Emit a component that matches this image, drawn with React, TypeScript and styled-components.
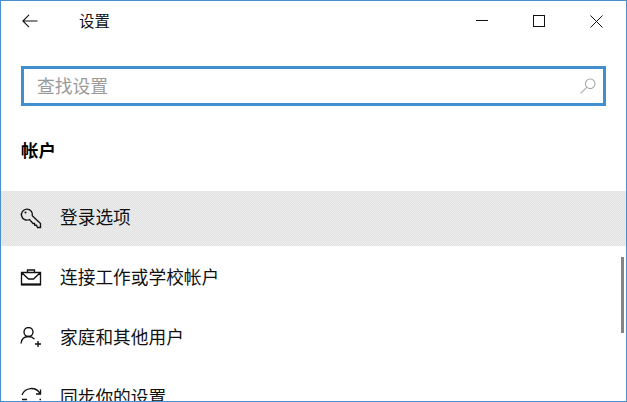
import React from 'react';
import styled, { createGlobalStyle } from 'styled-components';

const GlobalStyle = createGlobalStyle`
  html, body {
    margin: 0;
    padding: 0;
    background: #ffffff;
  }
  body {
    font-family: "Noto Sans CJK SC", "Liberation Sans", sans-serif;
  }
`;

const SettingsWindow = styled.div`
  position: relative;
  box-sizing: border-box;
  width: 627px;
  height: 402px;
  overflow: hidden;
  background: #ffffff;
  border: 1px solid #4a90d0;
  color: #111111;
`;

const TitleBar = styled.div`
  display: flex;
  align-items: center;
  height: 40px;
  padding-left: 21px;
  padding-right: 23px;
`;

const BackButton = styled.div`
  display: flex;
  width: 57px;
`;

const WindowTitle = styled.div`
  flex: 1;
  padding-bottom: 2px;
  font-size: 15.4px;
  line-height: 36px;
`;

const WindowButtons = styled.div`
  display: flex;
  gap: 45px;
  align-items: center;
`;

const SearchBox = styled.div`
  box-sizing: border-box;
  display: flex;
  align-items: center;
  justify-content: space-between;
  width: 585px;
  height: 40px;
  margin: 25px 0 0 20px;
  padding: 0 7px 0 13px;
  border: 3px solid #428fd0;
`;

const SearchPlaceholder = styled.span`
  position: relative;
  top: -1px;
  font-size: 17.8px;
  color: #9a9a9a;
`;

const SectionHeading = styled.h2`
  margin: 32px 0 0 20px;
  height: 23px;
  font-size: 17.4px;
  line-height: 24px;
  font-weight: 700;
  color: #000000;
`;

const NavList = styled.div`
  display: flex;
  flex-direction: column;
  gap: 5px;
  margin-top: 30px;
`;

const NavRow = styled.div<{ $selected?: boolean }>`
  flex: none;
  display: flex;
  align-items: center;
  gap: 17px;
  height: 55px;
  padding-left: 19px;
  background: ${(p) =>
    p.$selected ? 'repeating-conic-gradient(#e3e3e3 0 25%, #ebebeb 0 50%) 0 0 / 2px 2px' : 'transparent'};
`;

const NavLabel = styled.span`
  position: relative;
  top: -3px;
  font-size: 17.7px;
`;

const NavIcon = styled.svg`
  flex: none;
  width: 23px;
  height: 23px;
  fill: none;
  stroke: #111111;
  stroke-width: 1.35;
`;

const ScrollThumb = styled.div`
  position: absolute;
  top: 256px;
  right: 2px;
  width: 3px;
  height: 76px;
  background: #858585;
`;

const App: React.FC = () => (
  <>
    <GlobalStyle />
    <SettingsWindow>
      <TitleBar>
        <BackButton>
          <svg width="16" height="14" viewBox="0 0 16 14" fill="none" stroke="#111" strokeWidth="1.1">
            <path d="M15.500 7H1M7 .8 .9 7 7 13.200" />
          </svg>
        </BackButton>
        <WindowTitle>设置</WindowTitle>
        <WindowButtons>
          <svg width="12" height="12" viewBox="0 0 12 12" fill="none" stroke="#111" strokeWidth="1">
            <path d="M0 5.500h12" />
          </svg>
          <svg width="12" height="12" viewBox="0 0 12 12" fill="none" stroke="#111" strokeWidth="1">
            <rect x=".5" y=".5" width="11" height="11" />
          </svg>
          <svg width="13" height="13" viewBox="0 0 13 13" fill="none" stroke="#111" strokeWidth="1">
            <path d="M.5.5l12 12M12.500.5l-12 12" />
          </svg>
        </WindowButtons>
      </TitleBar>
      <SearchBox>
        <SearchPlaceholder>查找设置</SearchPlaceholder>
        <svg width="16" height="16" viewBox="0 0 16 16" fill="none" stroke="#a8a8a8" strokeWidth="1.1">
          <circle cx="10.200" cy="5.800" r="4.800" />
          <path d="M6.700 9.300.6 15.400" />
        </svg>
      </SearchBox>
      <SectionHeading>帐户</SectionHeading>
      <NavList>
        <NavRow $selected>
          <NavIcon viewBox="0 0 23 23">
            <path d="M12.300 8.800 20.500 16.500V20.500H17.500L16.500 18.200H14.800L14.500 16.500H13L9.500 12.500A5.500 5.500 0 1 1 12.300 8.800Z" />
            <circle cx="5.500" cy="5.500" r="1" fill="#111" stroke="none" />
          </NavIcon>
          <NavLabel>登录选项</NavLabel>
        </NavRow>
        <NavRow>
          <NavIcon viewBox="0 0 23 23">
            <path d="M1.500 5.500h19v12h-19zM7.500 5.500V3h7v2.500M1.500 5.500l7 6.500h5l7-6.500" />
            <path d="M1 17.500h20" strokeWidth="2" />
          </NavIcon>
          <NavLabel>连接工作或学校帐户</NavLabel>
        </NavRow>
        <NavRow>
          <NavIcon viewBox="0 0 23 23">
            <circle cx="8.500" cy="5" r="4.500" />
            <path d="M1 16.500c.5-4.500 3.200-7 7.500-7 2.500 0 4.500 1 6 2.600M18 14v6M15 17h6" />
          </NavIcon>
          <NavLabel>家庭和其他用户</NavLabel>
        </NavRow>
        <NavRow>
          <NavIcon viewBox="0 0 23 23">
            <path d="M2 8a10 10 0 0 1 18-1.500M20.500 2.500V7H16M2 12.500h5M19.500 12.500H21" />
          </NavIcon>
          <NavLabel>同步你的设置</NavLabel>
        </NavRow>
      </NavList>
      <ScrollThumb />
    </SettingsWindow>
  </>
);

export default App;
